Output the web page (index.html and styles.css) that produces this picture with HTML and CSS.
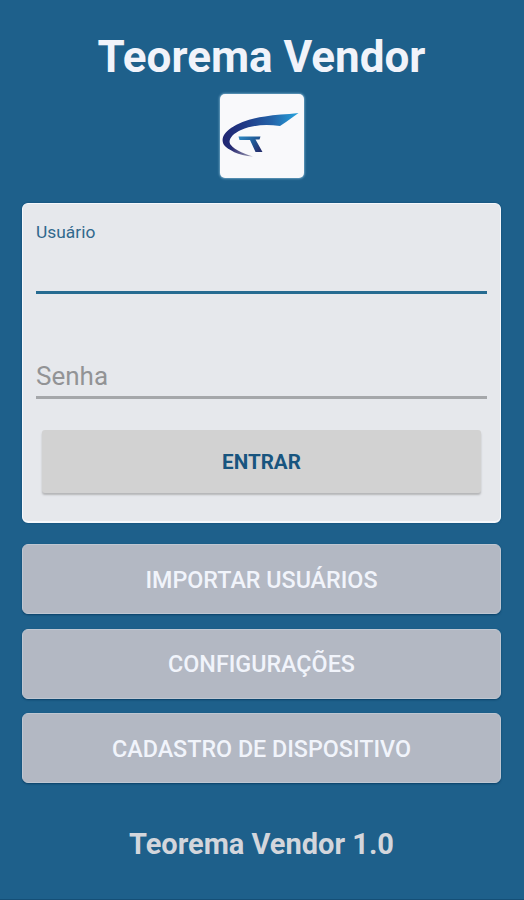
FILE: index.html
```html
<!DOCTYPE html>
<html lang="pt-BR">
<head>
<meta charset="utf-8">
<title>Teorema Vendor</title>
<link rel="stylesheet" href="styles.css">
</head>
<body>
<main class="screen">
  <h1 class="title">Teorema Vendor</h1>
  <div class="logo">
    <svg viewBox="0 0 84 84" width="84" height="84" aria-hidden="true">
      <defs>
        <linearGradient id="wing" x1="3" y1="0" x2="79" y2="0" gradientUnits="userSpaceOnUse">
          <stop offset="0" stop-color="#202571"/>
          <stop offset=".3" stop-color="#203b88"/>
          <stop offset=".65" stop-color="#2464a9"/>
          <stop offset="1" stop-color="#27a5df"/>
        </linearGradient>
        <linearGradient id="tail" x1="12" y1="52" x2="34" y2="63" gradientUnits="userSpaceOnUse">
          <stop offset="0" stop-color="#26266f"/>
          <stop offset="1" stop-color="#a7a6b8"/>
        </linearGradient>
        <linearGradient id="stem" x1="20" y1="44" x2="38" y2="58" gradientUnits="userSpaceOnUse">
          <stop offset="0" stop-color="#2d83bd"/>
          <stop offset=".55" stop-color="#205b98"/>
          <stop offset="1" stop-color="#25316f"/>
        </linearGradient>
      </defs>
      <path fill="url(#tail)" d="M4 48C8 57 18 61.500 33 62.500C22 59 12 55 9 48Z"/>
      <path fill="url(#wing)" d="M78.500 19C66 20.500 55 20.500 45 22.500C32 24 20 28 11 34C2 40 0 48 6 53C8 55 10 56 13 56C6 48 10 41 21 36C33 31 45 30 60 32L66 28Z"/>
      <path fill="url(#stem)" d="M18.500 42.500H40.500L39.500 45.500H35.500L42.500 58H35.500L30 46H19.500Z"/>
    </svg>
  </div>
  <form class="card">
    <label class="label" for="user">Usuário</label>
    <input class="field field-user" id="user" type="text">
    <input class="field field-password" type="password" placeholder="Senha" aria-label="Senha">
    <button class="enter" type="button">ENTRAR</button>
  </form>
  <nav class="actions">
    <button class="action" type="button">IMPORTAR USUÁRIOS</button>
    <button class="action" type="button">CONFIGURAÇÕES</button>
    <button class="action" type="button">CADASTRO DE DISPOSITIVO</button>
  </nav>
  <p class="version">Teorema Vendor 1.0</p>
</main>
</body>
</html>
```
FILE: styles.css
```css
* { box-sizing: border-box; }
body { margin: 0; background: #1e608b; font-family: Roboto, sans-serif; }
.screen {
  height: 900px;
  padding: 31px 23px 0 22px;
  display: flex;
  flex-direction: column;
  align-items: center;
  overflow: hidden;
  border-bottom: 1px solid #154f76;
}
.title {
  margin: 0;
  height: 52px;
  line-height: 52px;
  font-size: 44px;
  font-weight: 700;
  color: #f1f3fa;
  white-space: nowrap;
}
.logo {
  width: 84px;
  height: 84px;
  margin-top: 11px;
  border-radius: 5px;
  background: #f9f9fb;
  box-shadow: 0 0 2px 1px #659bbc;
}
.logo svg { display: block; }
.card {
  width: 100%;
  height: 320px;
  margin-top: 25px;
  padding: 19px 13px 0;
  display: flex;
  flex-direction: column;
  background: #e6e8ec;
  border: 1px solid #f5f8fc;
  border-bottom-width: 2px;
  border-radius: 6px;
  box-shadow: 0 0 2px #0c4770;
}
.label { height: 18px; line-height: 18px; font-size: 17.4px; color: #31698d; }
.field {
  width: 100%;
  padding: 0;
  background: transparent;
  border: 0;
  outline: 0;
  border-radius: 0;
  font: 400 26px Roboto, sans-serif;
  color: #333;
}
.field-user { height: 53px; border-bottom: 3px solid #266b91; }
.field-password { height: 45px; margin-top: 60px; padding-top: 2px; border-bottom: 3px solid #a5a7aa; }
.field::placeholder { color: #929395; opacity: 1; }
.enter {
  height: 63px;
  margin: 31px 6px 0;
  padding: 1px 0 0;
  border: 0;
  border-radius: 3px;
  background: #d2d2d2;
  box-shadow: 0 2px 2px #b5b6b8;
  font: 700 20.6px Roboto, sans-serif;
  color: #18557f;
}
.actions { width: 100%; margin-top: 21px; display: grid; gap: 14.7px; }
.action {
  height: 70px;
  padding: 1px 0 0;
  border: 1px solid #bfc7d2;
  border-radius: 6px;
  background: #b3b8c3;
  box-shadow: 0 1px 2px #0b4168;
  font: 500 23.3px Roboto, sans-serif;
  color: #f1f4fb;
}
.version {
  margin: 43px 0 0;
  line-height: 36px;
  font-size: 29px;
  font-weight: 700;
  color: #d3d6dc;
  white-space: nowrap;
}
```
